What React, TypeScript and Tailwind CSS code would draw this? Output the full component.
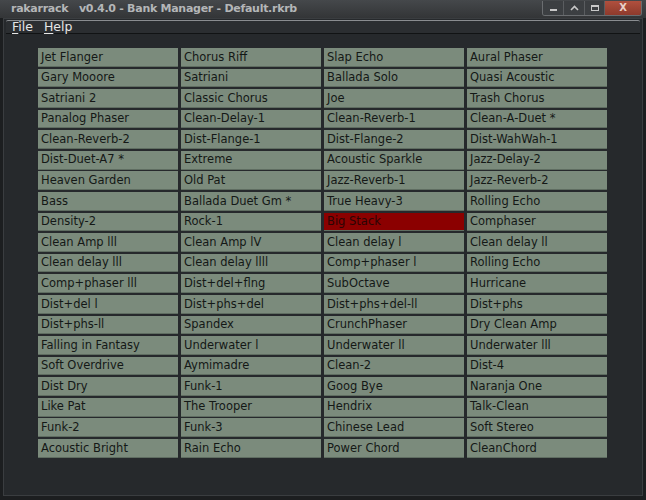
import React from 'react';

const BANKS: string[][] = [
  ['Jet Flanger', 'Gary Mooore', 'Satriani 2', 'Panalog Phaser', 'Clean-Reverb-2', 'Dist-Duet-A7 *', 'Heaven Garden', 'Bass', 'Density-2', 'Clean Amp lll', 'Clean delay lll', 'Comp+phaser lll', 'Dist+del l', 'Dist+phs-ll', 'Falling in Fantasy', 'Soft Overdrive', 'Dist Dry', 'Like Pat', 'Funk-2', 'Acoustic Bright'],
  ['Chorus Riff', 'Satriani', 'Classic Chorus', 'Clean-Delay-1', 'Dist-Flange-1', 'Extreme', 'Old Pat', 'Ballada Duet Gm *', 'Rock-1', 'Clean Amp lV', 'Clean delay llll', 'Dist+del+flng', 'Dist+phs+del', 'Spandex', 'Underwater l', 'Aymimadre', 'Funk-1', 'The Trooper', 'Funk-3', 'Rain Echo'],
  ['Slap Echo', 'Ballada Solo', 'Joe', 'Clean-Reverb-1', 'Dist-Flange-2', 'Acoustic Sparkle', 'Jazz-Reverb-1', 'True Heavy-3', 'Big Stack', 'Clean delay l', 'Comp+phaser l', 'SubOctave', 'Dist+phs+del-ll', 'CrunchPhaser', 'Underwater ll', 'Clean-2', 'Goog Bye', 'Hendrix', 'Chinese Lead', 'Power Chord'],
  ['Aural Phaser', 'Quasi Acoustic', 'Trash Chorus', 'Clean-A-Duet *', 'Dist-WahWah-1', 'Jazz-Delay-2', 'Jazz-Reverb-2', 'Rolling Echo', 'Comphaser', 'Clean delay ll', 'Rolling Echo', 'Hurricane', 'Dist+phs', 'Dry Clean Amp', 'Underwater lll', 'Dist-4', 'Naranja One', 'Talk-Clean', 'Soft Stereo', 'CleanChord'],
];

const App: React.FC = () => {
  const rows = BANKS[0].map((_, r) => BANKS.map((col) => col[r]));

  return (
    <div className="w-[646px] h-[500px] bg-[#1c1e20] flex flex-col overflow-hidden font-['DejaVu_Sans',sans-serif]">
      {/* Title bar */}
      <div className="h-[18px] flex items-center justify-between bg-gradient-to-b from-[#45484b] to-[#333537] pl-[11px] pr-[4px]">
        <span className="text-[11px] font-bold text-[#b4b6b8] tracking-tight whitespace-pre">rakarrack   v0.4.0 - Bank Manager - Default.rkrb</span>
        <div className="flex h-[15px] mt-[-2px] rounded-b-[3px] border border-t-0 border-[#6a6d70] overflow-hidden">
          <div className="w-[21px] flex items-end justify-center pb-[4px] border-r border-[#5a5d60] bg-[#3c3f42]">
            <div className="w-[7px] h-[2px] bg-[#c8c8c8]" />
          </div>
          <div className="w-[21px] flex items-center justify-center border-r border-[#5a5d60] bg-[#3c3f42]">
            <svg width="9" height="6" viewBox="0 0 9 6"><path d="M1 5 L4.5 1.5 L8 5" stroke="#c8c8c8" strokeWidth="1.6" fill="none" /></svg>
          </div>
          <div className="w-[20px] flex items-center justify-center border-r border-[#5a5d60] bg-[#3c3f42]">
            <div className="w-[8px] h-[6px] border-[1.5px] border-[#c8c8c8] border-t-2" />
          </div>
          <div className="w-[36px] flex items-center justify-center bg-gradient-to-b from-[#b0503e] to-[#8e3a2c]">
            <span className="text-[10px] font-bold text-[#e8d0c8] leading-none">X</span>
          </div>
        </div>
      </div>

      {/* Window body */}
      <div className="flex-1 flex flex-col bg-[#26292c] mx-[3px] mb-[4px] border border-[#3a3d40]">
        {/* Menu bar */}
        <div className="h-[14px] mt-[1px] mx-[2px] flex items-center gap-[11px] px-[6px] bg-[#2b2e31] border-t border-[#8a8d90] border-b border-b-[#111314] rounded-t-[2px]">
          <span className="text-[12.5px] leading-none text-[#e6e6e6]"><span className="underline underline-offset-2">F</span>ile</span>
          <span className="text-[12.5px] leading-none text-[#e6e6e6]"><span className="underline underline-offset-2">H</span>elp</span>
        </div>

        {/* Bank grid */}
        <div className="pl-[34px] pt-[14px]">
          <div className="grid grid-cols-[140px_140px_140px_140px] auto-rows-[18.7px] gap-x-[3px] gap-y-[1.9px] w-[569px]">
            {rows.flat().map((name, i) => {
              const active = name === 'Big Stack';
              return (
                <div
                  key={i}
                  className={`flex items-center pl-[3px] pt-[1px] text-[11.5px] leading-none whitespace-nowrap overflow-hidden border-b border-[#5f6d61] ${
                    active ? 'bg-[#8b0000] text-[#2a0505]' : 'bg-[#7b8b7c] text-[#141816]'
                  }`}
                >
                  {name}
                </div>
              );
            })}
          </div>
        </div>
      </div>
    </div>
  );
};

export default App;
